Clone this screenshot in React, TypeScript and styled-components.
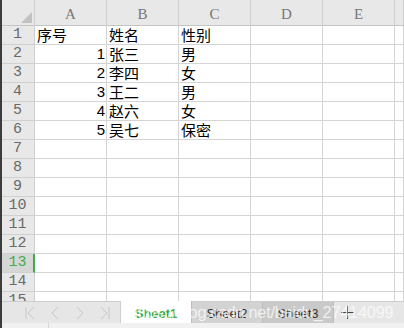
import React from "react";
import styled, { createGlobalStyle } from "styled-components";

const Global = createGlobalStyle`
  html, body { margin: 0; padding: 0; background: #ffffff; }
  body { width: 404px; height: 328px; overflow: hidden; }
`;

const Frame = styled.div`
  position: relative;
  width: 404px;
  height: 328px;
  display: flex;
  overflow: hidden;
  background: #ffffff;
`;

const LeftStrip = styled.div`
  width: 2px;
  background: #3c3c3c;
  flex: none;
`;

const Main = styled.div`
  flex: 1;
  display: flex;
  flex-direction: column;
  min-width: 0;
`;

const SheetArea = styled.div`
  height: 301px;
  overflow: hidden;
  flex: none;
`;

const Grid = styled.div`
  display: grid;
  grid-template-columns: 33px repeat(5, 72px) 1fr;
  grid-auto-rows: 19px;
  grid-template-rows: 26px;
`;

const Corner = styled.div`
  background: #e8e8e8;
  border-right: 1px solid #cfcfcf;
  border-bottom: 1px solid #c4c4c4;
  box-sizing: border-box;
  display: flex;
  align-items: flex-end;
  justify-content: flex-end;
  padding: 0 2px 2px 0;
`;

const ColHead = styled.div`
  background: #e8e8e8;
  border-right: 1px solid #cfcfcf;
  border-bottom: 1px solid #c4c4c4;
  box-sizing: border-box;
  display: flex;
  align-items: center;
  justify-content: center;
  font-family: "Liberation Serif", "DejaVu Serif", serif;
  font-size: 15px;
  color: #777777;
  padding-top: 4px;
`;

const RowHead = styled.div<{ $active?: boolean }>`
  background: ${(p) => (p.$active ? "#d6d6d6" : "#e8e8e8")};
  border-right: ${(p) => (p.$active ? "2px solid #3fae49" : "1px solid #cfcfcf")};
  border-bottom: 1px solid #d0d0d0;
  box-sizing: border-box;
  display: flex;
  align-items: flex-end;
  justify-content: center;
  font-family: "Liberation Mono", "DejaVu Sans Mono", monospace;
  font-size: 15px;
  line-height: 18px;
  color: ${(p) => (p.$active ? "#3fae49" : "#6a6a6a")};
  padding-right: ${(p) => (p.$active ? "0" : "1px")};
`;

const Cell = styled.div<{ $num?: boolean }>`
  border-right: 1px solid #d4d4d4;
  border-bottom: 1px solid #d4d4d4;
  box-sizing: border-box;
  display: flex;
  align-items: flex-end;
  justify-content: ${(p) => (p.$num ? "flex-end" : "flex-start")};
  padding: ${(p) => (p.$num ? "0 1px 0 0" : "0 0 0 2px")};
  font-family: ${(p) =>
    p.$num
      ? `"Liberation Sans", Arial, sans-serif`
      : `"Noto Sans CJK SC", "Noto Sans CJK JP", sans-serif`};
  font-size: 15px;
  line-height: 18px;
  color: #000000;
  white-space: nowrap;
  overflow: visible;
`;

const TabBar = styled.div`
  flex: none;
  display: flex;
  background: #e6e6e6;
  border-top: 1px solid #cccccc;
  box-sizing: border-box;
  height: 22px;
`;

const NavGroup = styled.div`
  width: 119px;
  display: flex;
  align-items: center;
  padding-left: 15px;
  border-right: 1px solid #cfcfcf;
  box-sizing: border-box;
`;

const NavBtn = styled.div`
  width: 25px;
  height: 21px;
  display: flex;
  align-items: center;
  justify-content: center;
`;

const Tab = styled.div<{ $active?: boolean; $bg: string }>`
  width: 71px;
  display: flex;
  align-items: center;
  justify-content: center;
  background: ${(p) => p.$bg};
  border-right: 1px solid #bdbdbd;
  box-sizing: border-box;
  margin-top: ${(p) => (p.$active ? "-1px" : "0")};
  font-family: "Liberation Sans", Arial, sans-serif;
  font-size: 13px;
  font-weight: ${(p) => (p.$active ? 700 : 400)};
  color: ${(p) => (p.$active ? "#34a93c" : "#333333")};
  padding-top: 2px;
`;

const AddBtn = styled.div`
  width: 26px;
  display: flex;
  align-items: center;
  justify-content: center;
`;

const BottomStrip = styled.div`
  flex: 1;
  background: #f1f1f1;
  display: flex;
`;

const StripDivider = styled.div`
  width: 1px;
  margin-left: 46px;
  background: #d6d6d6;
`;

const Watermark = styled.div`
  position: absolute;
  left: 129px;
  top: 303px;
  font-family: "Liberation Sans", Arial, sans-serif;
  font-size: 16.3px;
  letter-spacing: -0.2px;
  color: rgba(255, 255, 255, 0.72);
  white-space: nowrap;
  pointer-events: none;
`;

const columns = ["A", "B", "C", "D", "E"];

const data: Record<number, (string | null)[]> = {
  1: ["序号", "姓名", "性别", null, null],
  2: ["1", "张三", "男", null, null],
  3: ["2", "李四", "女", null, null],
  4: ["3", "王二", "男", null, null],
  5: ["4", "赵六", "女", null, null],
  6: ["5", "吴七", "保密", null, null],
};

const NavIcon = ({ kind }: { kind: "first" | "prev" | "next" | "last" }) => {
  const stroke = "#c6c6c6";
  return (
    <svg width="12" height="14" viewBox="0 0 12 14" fill="none">
      {kind === "first" && (
        <>
          <line x1="2" y1="1" x2="2" y2="13" stroke={stroke} strokeWidth="1" />
          <polyline points="10,1 4,7 10,13" stroke={stroke} strokeWidth="1" />
        </>
      )}
      {kind === "prev" && <polyline points="9,1 3,7 9,13" stroke={stroke} strokeWidth="1" />}
      {kind === "next" && <polyline points="3,1 9,7 3,13" stroke={stroke} strokeWidth="1" />}
      {kind === "last" && (
        <>
          <polyline points="2,1 8,7 2,13" stroke={stroke} strokeWidth="1" />
          <line x1="10" y1="1" x2="10" y2="13" stroke={stroke} strokeWidth="1" />
        </>
      )}
    </svg>
  );
};

export default function App() {
  const rows = Array.from({ length: 15 }, (_, i) => i + 1);
  return (
    <Frame>
      <Global />
      <LeftStrip />
      <Main>
        <SheetArea>
          <Grid>
            <Corner>
              <svg width="11" height="11" viewBox="0 0 11 11">
                <polygon points="11,0 11,11 0,11" fill="#c2c2c2" />
              </svg>
            </Corner>
            {columns.map((c) => (
              <ColHead key={c}>{c}</ColHead>
            ))}
            <ColHead />
            {rows.map((r) => (
              <React.Fragment key={r}>
                <RowHead $active={r === 13}>{r}</RowHead>
                {columns.map((c, ci) => {
                  const v = data[r]?.[ci] ?? null;
                  const isNum = v !== null && /^\d+$/.test(v);
                  return (
                    <Cell key={c} $num={isNum}>
                      {v}
                    </Cell>
                  );
                })}
                <Cell />
              </React.Fragment>
            ))}
          </Grid>
        </SheetArea>
        <TabBar>
          <NavGroup>
            <NavBtn>
              <NavIcon kind="first" />
            </NavBtn>
            <NavBtn>
              <NavIcon kind="prev" />
            </NavBtn>
            <NavBtn>
              <NavIcon kind="next" />
            </NavBtn>
            <NavBtn>
              <NavIcon kind="last" />
            </NavBtn>
          </NavGroup>
          <Tab $active $bg="#ffffff">Sheet1</Tab>
          <Tab $bg="#d3d3d3">Sheet2</Tab>
          <Tab $bg="#c9c9c9">Sheet3</Tab>
          <AddBtn>
            <svg width="13" height="13" viewBox="0 0 13 13">
              <line x1="6.5" y1="0" x2="6.5" y2="13" stroke="#444" strokeWidth="1" />
              <line x1="0" y1="6.5" x2="13" y2="6.5" stroke="#444" strokeWidth="1" />
            </svg>
          </AddBtn>
        </TabBar>
        <BottomStrip>
          <StripDivider />
        </BottomStrip>
      </Main>
      <Watermark>https://blog.csdn.net/baidu_27414099</Watermark>
    </Frame>
  );
}
